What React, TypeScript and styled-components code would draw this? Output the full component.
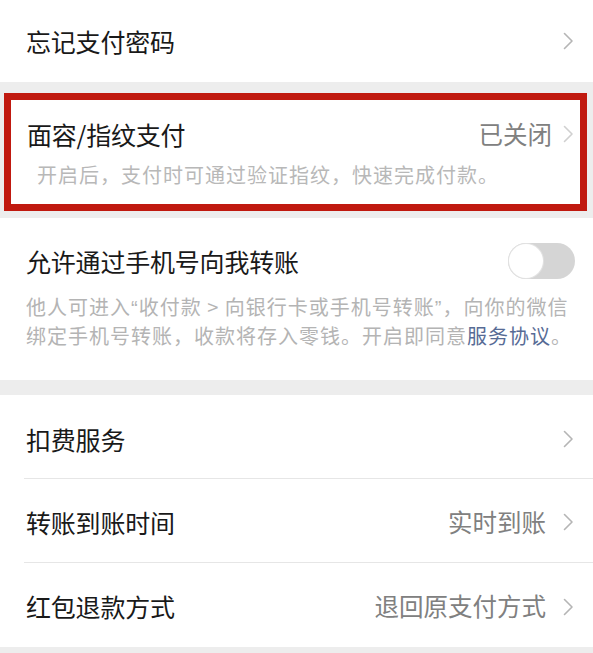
import React from "react";
import styled, { createGlobalStyle } from "styled-components";

const Global = createGlobalStyle`
  html, body { margin: 0; padding: 0; background: #ededed; }
  body { font-family: "Noto Sans CJK SC", "Noto Sans", sans-serif; -webkit-font-smoothing: antialiased; }
  * { box-sizing: border-box; }
`;

const Page = styled.div`
  width: 593px;
  height: 653px;
  overflow: hidden;
  background: #ededed;
  display: flex;
  flex-direction: column;
`;

const Section = styled.div<{ $gapTop?: number }>`
  background: #ffffff;
  margin-top: ${(p) => p.$gapTop ?? 0}px;
`;

const Row = styled.div<{ $h: number; $divider?: boolean; $shift?: number }>`
  height: ${(p) => p.$h}px;
  display: flex;
  align-items: center;
  padding: ${(p) => p.$shift ?? 0}px 19px 0 26px;
  position: relative;
  ${(p) =>
    p.$divider
      ? `&::after { content: ""; position: absolute; left: 24px; right: 0; bottom: 0; height: 1px; background: #e6e6e6; }`
      : ""}
`;

const Title = styled.div`
  flex: 1;
  font-size: 25px;
  color: #191919;
  line-height: 1;
  letter-spacing: -0.2px;
`;

const Value = styled.div<{ $gap?: number }>`
  font-size: 24.5px;
  color: #808080;
  line-height: 1;
  margin-right: ${(p) => p.$gap ?? 17}px;
`;

const AnnotWrap = styled.div`
  background: #ededed;
  padding: 11px 6px 7px 4px;
`;

const AnnotBox = styled.div`
  height: 118px;
  background: #ffffff;
  border: 7px solid #c0190f;
  padding: 20px 6px 0 16px;
  display: flex;
  flex-direction: column;
`;

const AnnotHead = styled.div`
  display: flex;
  align-items: center;
  height: 28px;
`;

const Desc = styled.div`
  font-size: 20px;
  color: #b4b4b4;
  line-height: 28px;
`;

const AnnotDesc = styled(Desc)`
  margin-top: 13px;
  padding-left: 10px;
  letter-spacing: 1px;
  color: #b8b8b8;
`;

const ToggleSection = styled.div`
  background: #ffffff;
  height: 162px;
  padding: 25px 18px 0 26px;
`;

const ToggleHead = styled.div`
  display: flex;
  align-items: center;
  justify-content: space-between;
  height: 36px;
`;

const Switch = styled.div<{ $on?: boolean }>`
  width: 67px;
  height: 36px;
  border-radius: 18px;
  background: ${(p) => (p.$on ? "#07c160" : "#d5d5d5")};
  position: relative;
  &::after {
    content: "";
    position: absolute;
    top: 1px;
    left: 1px;
    width: 34px;
    height: 34px;
    border-radius: 50%;
    background: #ffffff;
    box-shadow: 0 0 0 1px #e2e2e2;
  }
`;

const ToggleDesc = styled(Desc)`
  margin-top: 14px;
  letter-spacing: 1px;
`;

const Line = styled.span`
  display: block;
  white-space: nowrap;
`;

const Quote = styled.span`
  font-family: "Liberation Sans", "Noto Sans", sans-serif;
`;

const Link = styled.span`
  color: #576b95;
`;

const Chevron = ({ light }: { light?: boolean }) => (
  <svg width="11" height="18" viewBox="0 0 11 18" fill="none">
    <polyline
      points="1.5,1.5 9,9 1.5,16.5"
      stroke={light ? "#d0d0d0" : "#b5b5b5"}
      strokeWidth="1.6"
      strokeLinecap="round"
      strokeLinejoin="round"
    />
  </svg>
);

export default function App() {
  return (
    <Page>
      <Global />
      <Section>
        <Row $h={82}>
          <Title>忘记支付密码</Title>
          <Chevron />
        </Row>
      </Section>

      <AnnotWrap>
        <AnnotBox>
          <AnnotHead>
            <Title>面容/指纹支付</Title>
            <Value $gap={11}>已关闭</Value>
            <Chevron light />
          </AnnotHead>
          <AnnotDesc>开启后，支付时可通过验证指纹，快速完成付款。</AnnotDesc>
        </AnnotBox>
      </AnnotWrap>

      <ToggleSection>
        <ToggleHead>
          <Title>允许通过手机号向我转账</Title>
          <Switch />
        </ToggleHead>
        <ToggleDesc>
          <Line>
            他人可进入<Quote>“</Quote>收付款 &gt; 向银行卡或手机号转账<Quote>”</Quote>，向你的微信
          </Line>
          <Line>
            绑定手机号转账，收款将存入零钱。开启即同意<Link>服务协议</Link>。
          </Line>
        </ToggleDesc>
      </ToggleSection>

      <Section $gapTop={15}>
        <Row $h={84} $divider $shift={4}>
          <Title>扣费服务</Title>
          <Chevron />
        </Row>
        <Row $h={84} $divider $shift={2}>
          <Title>转账到账时间</Title>
          <Value>实时到账</Value>
          <Chevron />
        </Row>
        <Row $h={84} $shift={3}>
          <Title>红包退款方式</Title>
          <Value>退回原支付方式</Value>
          <Chevron />
        </Row>
      </Section>
    </Page>
  );
}
